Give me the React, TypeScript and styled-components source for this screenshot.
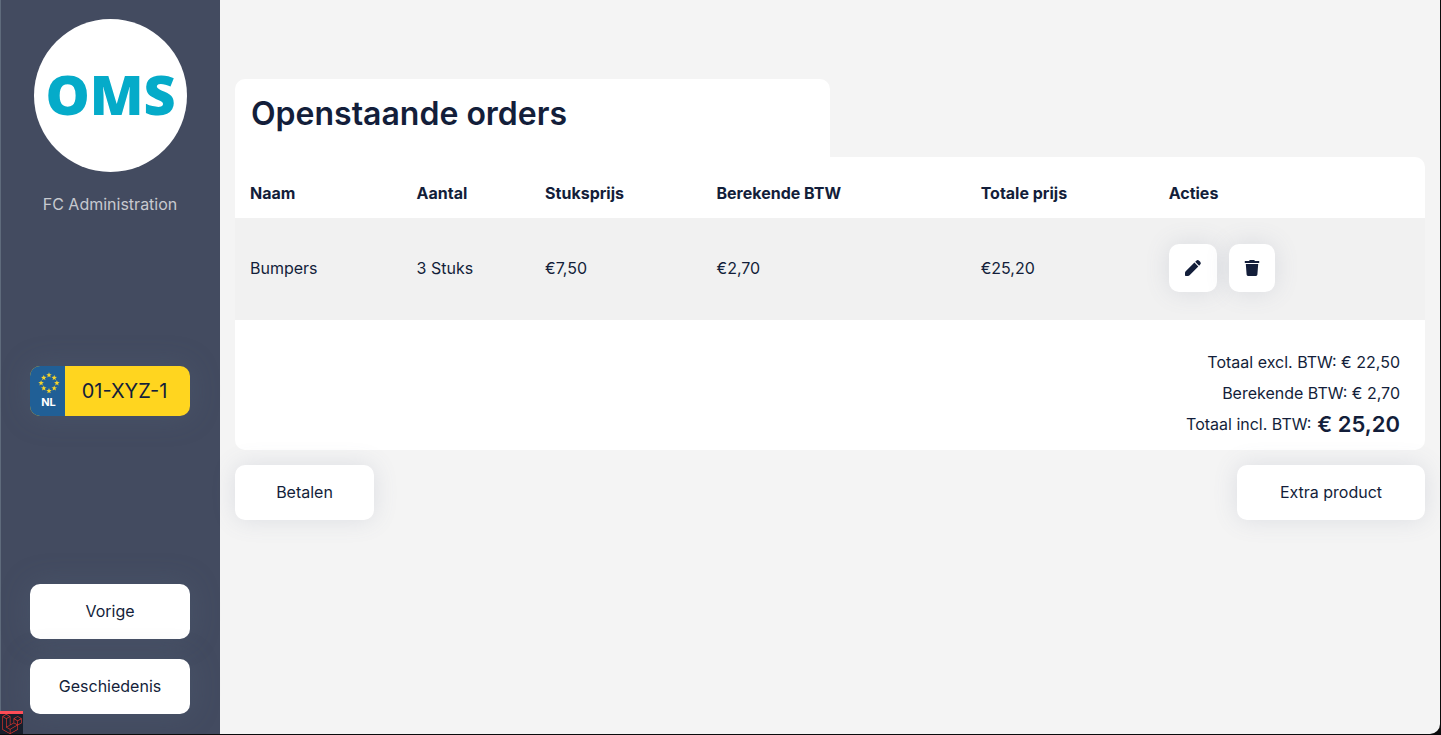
import React from "react";
import styled, { createGlobalStyle } from "styled-components";
import { SiLaravel } from "react-icons/si";

const ink = "#131e3a";

const GlobalStyle = createGlobalStyle`
  *, *::before, *::after { box-sizing: border-box; }
  html, body { margin: 0; background: #0b0b0c; }
  body, button, table {
    font-family: Inter, "Liberation Sans", sans-serif;
    font-size: 16px;
    line-height: 24px;
    color: ${ink};
  }
`;

const Shell = styled.div`
  display: flex;
  min-height: calc(100vh - 1px);
  margin: 0 1px 1px 0;
  background: #f4f4f4;
  border-bottom-right-radius: 10px;
  overflow: hidden;
`;

const Sidebar = styled.aside`
  flex: none;
  width: 220px;
  padding: 19px 30px 20px 29px;
  display: flex;
  flex-direction: column;
  justify-content: space-between;
  background: #434b60;
  border-left: 1px solid #5f6b7c;
`;

const Account = styled.div`
  display: flex;
  flex-direction: column;
  align-items: center;
  gap: 20px;
  color: #c7c9cf;
`;

const Logo = styled.svg`
  display: block;
  width: 153px;
  height: 153px;
`;

const Plate = styled.div`
  display: flex;
  height: 50px;
  margin-bottom: 18px;
  border-radius: 10px;
  overflow: hidden;
  background: #ffd51f;
  box-shadow: 0 0 30px rgba(90, 110, 130, 0.25);
`;

const PlateBand = styled.div`
  width: 35px;
  display: flex;
  flex-direction: column;
  align-items: center;
  justify-content: center;
  padding-left: 2px;
  background: #205f96;
  color: #fff;
  font-size: 11px;
  line-height: 16px;
  font-weight: 700;
`;

const PlateNumber = styled.div`
  flex: 1;
  padding-right: 6px;
  text-align: center;
  font-size: 20px;
  line-height: 50px;
`;

const Stack = styled.nav`
  display: flex;
  flex-direction: column;
  gap: 20px;
`;

const Button = styled.button<{ $minWidth?: number }>`
  height: 55px;
  min-width: ${(p) => p.$minWidth ?? 0}px;
  padding: 0 40px 1px;
  border: 0;
  border-radius: 10px;
  background: #fff;
  box-shadow: 0 0 24px rgba(100, 115, 140, 0.16);
  cursor: pointer;
`;

const SideButton = styled(Button)`
  padding: 0 0 1px;
  box-shadow: 0 0 30px rgba(90, 110, 130, 0.25);
`;

const IconButton = styled(Button)<{ $width: number }>`
  width: ${(p) => p.$width}px;
  height: 48px;
  padding: 0;
  display: flex;
  align-items: center;
  justify-content: center;
`;

const Main = styled.main`
  flex: 1;
  min-width: 0;
  padding: 79px 15px 20px;
`;

const TitleTab = styled.header`
  width: 50%;
  height: 78px;
  padding: 13px 16px;
  background: #fff;
  border-radius: 10px 10px 0 0;
`;

const Title = styled.h1`
  margin: 0;
  font-size: 32px;
  line-height: 44px;
  font-weight: 600;
`;

const Card = styled.section`
  background: #fff;
  border-radius: 0 10px 10px 10px;
  overflow: hidden;
`;

const Orders = styled.table`
  width: 100%;
  table-layout: fixed;
  border-collapse: collapse;
  text-align: left;
  th, td { padding: 0 15px; }
  th { height: 61px; padding-top: 10px; font-weight: 700; }
  td { height: 102px; padding-bottom: 2px; background: #f1f1f1; }
`;

const Actions = styled.div`
  display: flex;
  gap: 12px;
`;

const Totals = styled.div`
  display: flex;
  flex-direction: column;
  align-items: flex-end;
  gap: 7px;
  padding: 30px 25px 14px;
`;

const TotalLine = styled.p`
  display: flex;
  align-items: center;
  gap: 6px;
  height: 24px;
  margin: 0;
  strong { font-size: 22px; font-weight: 600; }
`;

const Footer = styled.footer`
  display: flex;
  justify-content: space-between;
  margin-top: 15px;
`;

const DebugBadge = styled.a`
  position: fixed;
  left: 0;
  bottom: 1px;
  width: 23px;
  height: 23px;
  display: flex;
  align-items: center;
  justify-content: center;
  border-top: 3px solid #ff4d57;
  background: #171e2b;
  color: #e8352b;
`;

const columns = [
  { label: "Naam", width: "14%" },
  { label: "Aantal", width: "10.8%" },
  { label: "Stuksprijs", width: "14.4%" },
  { label: "Berekende BTW", width: "22.2%" },
  { label: "Totale prijs", width: "15.8%" },
  { label: "Acties", width: "22.8%" },
];

const starPath = "M0-3 .8-1 2.9-.9 1.2.4 1.8 2.5 0 1.3-1.8 2.5-1.2.4-2.9-.9-.8-1Z";

const EuStars = () => (
  <svg width="22" height="22" viewBox="-11 -11 22 22" aria-hidden="true">
    {Array.from({ length: 8 }, (_, i) => {
      const a = (i * Math.PI) / 4;
      const r = i % 2 ? 7.4 : 7.9;
      return (
        <path key={i} d={starPath} fill="#f4d32c" transform={`translate(${Math.sin(a) * r} ${-Math.cos(a) * r}) scale(.95)`} />
      );
    })}
  </svg>
);

const PencilIcon = () => (
  <svg width="18" height="18" viewBox="0 0 18 18" fill={ink} aria-hidden="true">
    <path d="M10.4 3.6 14.3 7.5 5.6 16.2Q4.9 16.9 4 16.9H1.7Q1 16.9 1 16.2V14Q1 13 1.7 12.3ZM11.2 2.8l1.1-1.1q1.4-1.4 2.8 0l1.1 1.1q1.4 1.4 0 2.8l-1.1 1.1Z" />
  </svg>
);

const TrashIcon = () => (
  <svg width="16" height="18" viewBox="0 0 16 18" fill={ink} aria-hidden="true">
    <path d="M.8 2H5Q5.4 1 6.2 1H9.8Q10.6 1 11 2H15.2V4H.8ZM1.8 5H14.2L13.4 15.6Q13.3 17 12 17H4Q2.7 17 2.6 15.6Z" />
  </svg>
);

export default function App() {
  return (
    <>
      <GlobalStyle />
      <Shell>
        <Sidebar>
          <Account>
            <Logo viewBox="0 0 154 154" role="img" aria-label="OMS">
              <circle cx="77" cy="77" r="77" fill="#fff" />
              <text x="77" y="97" textAnchor="middle" fontFamily="Open Sans, sans-serif" fontWeight="800" fontSize="56" fill="#05abc9">OMS</text>
            </Logo>
            <span>FC Administration</span>
          </Account>
          <Plate>
            <PlateBand>
              <EuStars />
              NL
            </PlateBand>
            <PlateNumber>01-XYZ-1</PlateNumber>
          </Plate>
          <Stack>
            <SideButton type="button">Vorige</SideButton>
            <SideButton type="button">Geschiedenis</SideButton>
          </Stack>
        </Sidebar>
        <Main>
          <TitleTab>
            <Title>Openstaande orders</Title>
          </TitleTab>
          <Card>
            <Orders>
              <colgroup>
                {columns.map((c) => (
                  <col key={c.label} width={c.width} />
                ))}
              </colgroup>
              <thead>
                <tr>
                  {columns.map((c) => (
                    <th key={c.label} scope="col">{c.label}</th>
                  ))}
                </tr>
              </thead>
              <tbody>
                <tr>
                  <td>Bumpers</td>
                  <td>3 Stuks</td>
                  <td>€7,50</td>
                  <td>€2,70</td>
                  <td>€25,20</td>
                  <td>
                    <Actions>
                      <IconButton type="button" $width={48} aria-label="Bewerken"><PencilIcon /></IconButton>
                      <IconButton type="button" $width={46} aria-label="Verwijderen"><TrashIcon /></IconButton>
                    </Actions>
                  </td>
                </tr>
              </tbody>
            </Orders>
            <Totals>
              <TotalLine>Totaal excl. BTW: € 22,50</TotalLine>
              <TotalLine>Berekende BTW: € 2,70</TotalLine>
              <TotalLine>Totaal incl. BTW: <strong>€ 25,20</strong></TotalLine>
            </Totals>
          </Card>
          <Footer>
            <Button type="button" $minWidth={139}>Betalen</Button>
            <Button type="button" $minWidth={188}>Extra product</Button>
          </Footer>
        </Main>
      </Shell>
      <DebugBadge href="#debug" aria-label="Debugbar">
        <SiLaravel size={20} />
      </DebugBadge>
    </>
  );
}
